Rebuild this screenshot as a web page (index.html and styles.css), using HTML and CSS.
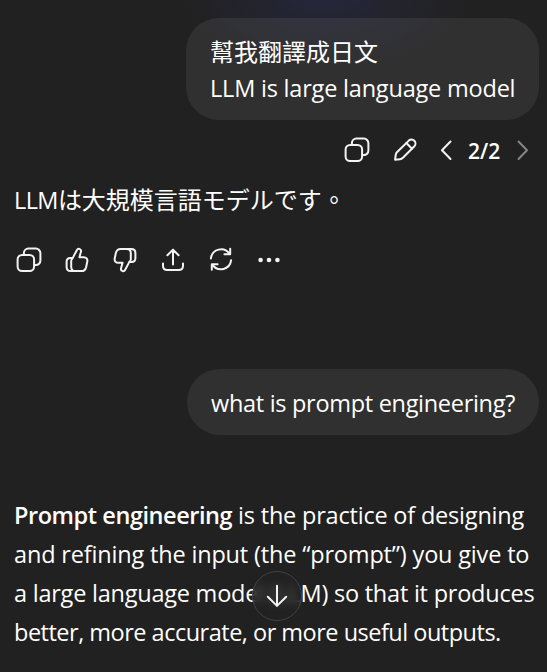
FILE: index.html
```
<!DOCTYPE html>
<html lang="zh-Hant">
<head>
    <meta charset="UTF-8">
    <meta name="viewport" content="width=device-width, initial-scale=1.0">
    <title>Chat</title>
    <link rel="stylesheet" href="styles.css">
</head>
<body>
    <!-- Shared icons -->
    <svg class="sprite" width="0" height="0">
        <symbol id="copy" viewBox="0 0 30 30">
            <rect x="3.6" y="9.9" width="16.5" height="16.2" rx="4.5"/>
            <path d="M9.9 9.5V8.1a4.5 4.5 0 0 1 4.5-4.5h7.5a4.5 4.5 0 0 1 4.5 4.5v7.5a4.5 4.5 0 0 1-4.5 4.5h-1.5"/>
        </symbol>
        <symbol id="thumb" viewBox="0 0 30 30">
            <path d="M10.5 13.4 14.8 5.2c.6-1.2 1.5-1.7 2.6-1.3 1.4.5 1.9 1.8 1.5 3.1l-1.5 5.2h4.3c2.5 0 4.1 1.9 3.6 4.3l-1.2 5.7c-.6 2.5-2.2 3.9-4.7 3.9h-6.1c-2.6 0-4.1-1.5-4.1-4.1v-6.2c0-.9.3-1.7 1.3-2.4z"/>
            <path d="M10.5 13.1H8.3c-2.3 0-3.7 1.4-3.7 3.7V22c0 2.6 1.5 4.1 4.1 4.1h3.5"/>
        </symbol>
    </svg>

    <main class="chat">
        <div class="bubble first">
            <div class="line zh">幫我翻譯成日文</div>
            <div class="line text u1">LLM is large language model</div>
        </div>

        <div class="user-actions">
            <svg class="icon"><use href="#copy"/></svg>
            <svg class="icon pencil" viewBox="0 0 30 30"><path d="M5.1 24.7 5.7 20c.2-1.3.6-2.1 1.5-3L18.8 5.6a4 4 0 0 1 5.6 5.7L12.9 22.8c-.9.9-1.7 1.3-3 1.4z"/><path d="m16.4 8 5.6 5.7"/></svg>
            <svg class="chevron" viewBox="0 0 12 30"><path d="M10.5 6.5 2 15.2l8.5 8.8"/></svg>
            <span class="count">2/2</span>
            <svg class="chevron off" viewBox="0 0 12 30"><path d="M1.5 6.5 10 15.2 1.5 24"/></svg>
        </div>

        <p class="answer"><span class="text llm">LLM</span><span lang="ja" class="ja">は大規模言語モデルです</span><span class="zh">。</span></p>

        <div class="actions">
            <svg class="icon"><use href="#copy"/></svg>
            <svg class="icon"><use href="#thumb"/></svg>
            <svg class="icon flip"><use href="#thumb"/></svg>
            <svg class="icon" viewBox="0 0 30 30"><path d="M15 19.5V4.8M9.4 10.2 15 4.6l5.6 5.6M5 18.5v2.3c0 2.9 1.5 4.3 4.3 4.3h11.4c2.8 0 4.3-1.4 4.3-4.3v-2.3"/></svg>
            <svg class="icon" viewBox="0 0 30 30"><path d="M4.9 13.4A10.2 10.2 0 0 1 23.4 8.7M24.2 3.7v5.5h-5.8M25.1 15.2a10.2 10.2 0 0 1-18.5 4.7M5.8 24.8v-5.5h5.8"/></svg>
            <svg class="icon dots" viewBox="0 0 30 30"><circle cx="6.6" cy="15" r="2.3"/><circle cx="15" cy="15" r="2.3"/><circle cx="23.4" cy="15" r="2.3"/></svg>
        </div>

        <div class="bubble second">
            <div class="line text u2">what is prompt engineering?</div>
        </div>

        <div class="reply text">
            <div class="r1"><strong>Prompt engineering</strong> is the practice of designing</div>
            <div class="r2">and refining the input (the “prompt”) you give to</div>
            <div class="r3">a large language model (LLM) so that it produces</div>
            <div class="r4">better, more accurate, or more useful outputs.</div>
        </div>
    </main>

    <button class="scroll-down" aria-label="Scroll down">
        <svg class="icon" viewBox="0 0 30 30"><path d="M15 4.7v20.2M5.8 15.7 15 24.9l9.2-9.2"/></svg>
    </button>
</body>
</html>
```
FILE: styles.css
```
* {
    box-sizing: border-box;
}

body {
    margin: 0;
    width: 547px;
    height: 672px;
    overflow: hidden;
    background: radial-gradient(ellipse 150px 80px at 325px -10px, #26273f 0%, rgba(37, 38, 56, 0.6) 45%, rgba(33, 33, 33, 0) 100%) #212121;
    color: #fff;
    font-family: "Open Sans", "Noto Sans CJK TC", sans-serif;
    font-size: 24px;
}

.sprite {
    position: absolute;
}

.chat {
    display: flex;
    flex-direction: column;
    padding: 18px 8px 0 14px;
}

.text {
    font-size: 23.5px;
}

/* User messages */
.bubble {
    align-self: flex-end;
    background-color: rgba(255, 255, 255, 0.07);
    border-radius: 33px;
    white-space: nowrap;
}

.first {
    width: 353px;
    height: 102px;
    padding: 15px 24px;
}

.second {
    width: 352px;
    height: 66px;
    margin-top: 94px;
    padding: 16px 24px;
}

.line {
    height: 36px;
    line-height: 36px;
}

.u1 {
    line-height: 39px;
    letter-spacing: -0.2px;
}

.u2 {
    line-height: 37px;
    letter-spacing: -0.3px;
}

.zh {
    font-family: "Noto Sans CJK TC", sans-serif;
}

.ja {
    font-family: "Noto Sans CJK JP", sans-serif;
}

/* Icons */
.icon,
.chevron {
    flex: none;
    width: 30px;
    height: 30px;
    fill: none;
    stroke: #f3f3f3;
    stroke-width: 2;
    stroke-linecap: round;
    stroke-linejoin: round;
}

.chevron {
    width: 12px;
}

.off {
    stroke: #858585;
}

.flip {
    transform: rotate(180deg);
}

.dots {
    fill: #f3f3f3;
    stroke: none;
}

.user-actions {
    display: flex;
    align-items: center;
    height: 30px;
    margin: 15px 10px 0 0;
    justify-content: flex-end;
}

.pencil {
    margin: 0 20px 0 18px;
}

.count {
    width: 32px;
    margin: 0 17px 0 16px;
    padding-top: 2px;
    font-size: 21px;
    font-weight: 600;
    line-height: 32px;
    white-space: nowrap;
}

.answer {
    height: 36px;
    margin: 16px 0 0;
    line-height: 36px;
    white-space: nowrap;
}

.llm {
    letter-spacing: -0.6px;
}

.actions {
    display: flex;
    gap: 18px;
    margin-top: 28px;
}

/* Assistant reply */
.reply {
    margin-top: 61px;
    line-height: 39px;
    white-space: nowrap;
}

strong {
    font-weight: 600;
    letter-spacing: -0.44px;
}

.r1 {
    letter-spacing: -0.2px;
}

.r2 {
    letter-spacing: -0.17px;
}

.r3 {
    letter-spacing: -0.23px;
}

.r4 {
    letter-spacing: -0.5px;
}

/* Floating button */
.scroll-down {
    position: absolute;
    left: 252px;
    top: 571px;
    display: flex;
    align-items: center;
    justify-content: center;
    width: 50px;
    height: 50px;
    padding: 0;
    border: 1px solid #434343;
    border-radius: 50%;
    background-color: rgba(33, 33, 33, 0.75);
    backdrop-filter: blur(4px);
}
```
